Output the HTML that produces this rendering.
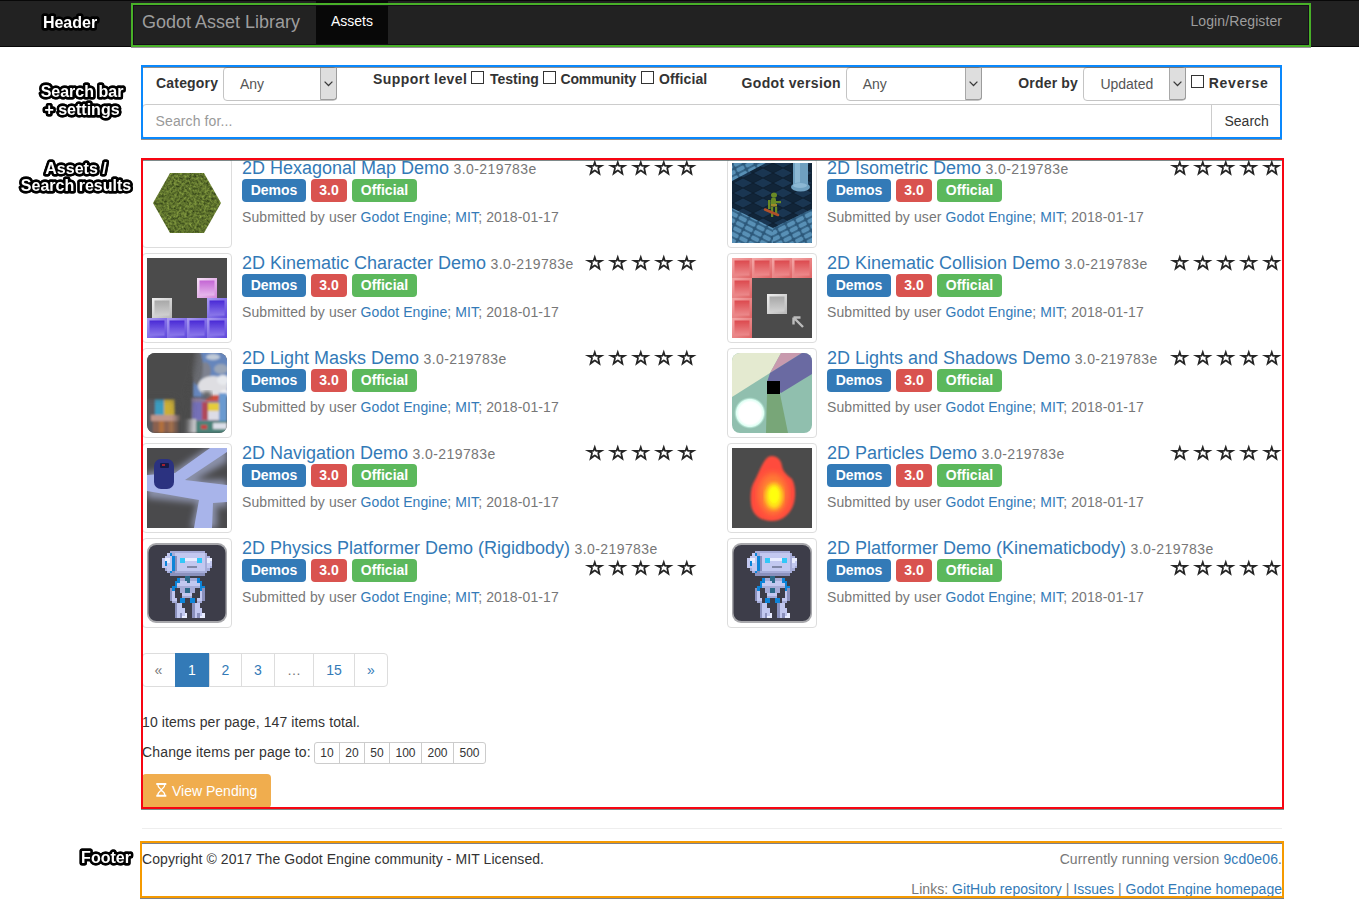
<!DOCTYPE html>
<html><head><meta charset="utf-8"><title>Godot Asset Library</title>
<style>
html,body{margin:0;padding:0;width:1359px;height:900px;overflow:hidden;background:#fff;font-family:"Liberation Sans", sans-serif;}
.t{position:absolute;white-space:nowrap;}
.a{color:#337ab7;}
.thumb{position:absolute;width:90px;height:90px;box-sizing:border-box;border:1px solid #ddd;border-radius:4px;padding:4px;background:#fff;}
.lbl{position:absolute;height:23px;border-radius:4px;color:#fff;font-weight:bold;font-size:14px;line-height:23px;text-align:center;white-space:nowrap;}
.ann{position:absolute;width:200px;text-align:center;font-size:16px;line-height:16px;font-weight:bold;color:#fff;white-space:nowrap;-webkit-text-stroke:5px #000;paint-order:stroke fill;stroke-linejoin:round;text-shadow:0 0 1px #000;}
</style></head><body>
<svg width="0" height="0" style="position:absolute"><defs><linearGradient id="gpu" x1="0" y1="0" x2="0" y2="1"><stop offset="0" stop-color="#4a2ad6"/><stop offset="1" stop-color="#8a78ea"/></linearGradient><linearGradient id="gpuo" x1="0" y1="0" x2="1" y2="1"><stop offset="0" stop-color="#aa9cf2"/><stop offset="1" stop-color="#6048dc"/></linearGradient><linearGradient id="gpk" x1="0" y1="0" x2="0" y2="1"><stop offset="0" stop-color="#c466d4"/><stop offset="1" stop-color="#e6b8ec"/></linearGradient><linearGradient id="gpko" x1="0" y1="0" x2="1" y2="1"><stop offset="0" stop-color="#f6e2f6"/><stop offset="1" stop-color="#d488dc"/></linearGradient><linearGradient id="ggy" x1="0" y1="0" x2="0" y2="1"><stop offset="0" stop-color="#a8a8a8"/><stop offset="1" stop-color="#d0d0d0"/></linearGradient><linearGradient id="ggyo" x1="0" y1="0" x2="1" y2="1"><stop offset="0" stop-color="#f0f0f0"/><stop offset="1" stop-color="#b8b8b8"/></linearGradient><linearGradient id="grd" x1="0" y1="0" x2="0" y2="1"><stop offset="0" stop-color="#dc4a4e"/><stop offset="1" stop-color="#ec8a8c"/></linearGradient><linearGradient id="grdo" x1="0" y1="0" x2="1" y2="1"><stop offset="0" stop-color="#f4a8a8"/><stop offset="1" stop-color="#e06466"/></linearGradient><filter id="b06"><feGaussianBlur stdDeviation="0.6"/></filter><filter id="b1"><feGaussianBlur stdDeviation="1"/></filter><filter id="b2"><feGaussianBlur stdDeviation="2"/></filter><filter id="b3"><feGaussianBlur stdDeviation="3"/></filter><clipPath id="starclip"><polygon points="9.81,-0.48 11.50,4.93 19.56,5.03 14.15,8.32 15.74,15.84 9.81,11.39 4.19,15.84 6.10,8.32 -0.16,4.93 7.90,4.93"/></clipPath></defs></svg><div style="position:absolute;left:0px;top:0px;width:1359px;height:47px;background:#222;border-top:1px solid #080808;border-bottom:1px solid #080808;box-sizing:border-box"></div>
<div style="position:absolute;left:316px;top:1px;width:72px;height:45px;background:#080808"></div>
<div class="t" style="left:142px;top:12.76px;font-size:18px;line-height:18px;color:#9d9d9d;font-weight:normal;">Godot Asset Library</div>
<div class="t" style="left:331px;top:14.15px;font-size:14px;line-height:14px;color:#fff;font-weight:normal;">Assets</div>
<div class="t" style="right:76.90px;top:14.15px;font-size:14px;line-height:14px;color:#9d9d9d;font-weight:normal;letter-spacing:0.1px;">Login/Register</div>
<div style="position:absolute;left:131px;top:3px;width:1180px;height:44px;border:2px solid #48b028;box-sizing:border-box;box-shadow:inset 0 0 0 1px #160d1a"></div>
<div style="position:absolute;left:131px;top:47px;width:1180px;height:1px;background:rgba(60,40,60,0.5)"></div>
<svg style="position:absolute;left:-30px;top:8.2px;overflow:visible" width="200" height="26"><text x="100" y="20" text-anchor="middle" font-family="Liberation Sans, sans-serif" font-weight="bold" font-size="16" fill="#fff" stroke="#000" stroke-width="5" stroke-linejoin="round" paint-order="stroke" style="filter:drop-shadow(0 0 0.4px #000)">Header</text></svg>
<svg style="position:absolute;left:-18px;top:76.8px;overflow:visible" width="200" height="26"><text x="100" y="20" text-anchor="middle" font-family="Liberation Sans, sans-serif" font-weight="bold" font-size="16" fill="#fff" stroke="#000" stroke-width="5" stroke-linejoin="round" paint-order="stroke" style="filter:drop-shadow(0 0 0.4px #000)">Search bar</text></svg>
<svg style="position:absolute;left:-18px;top:94.6px;overflow:visible" width="200" height="26"><text x="100" y="20" text-anchor="middle" font-family="Liberation Sans, sans-serif" font-weight="bold" font-size="16" fill="#fff" stroke="#000" stroke-width="5" stroke-linejoin="round" paint-order="stroke" style="filter:drop-shadow(0 0 0.4px #000)">+ settings</text></svg>
<svg style="position:absolute;left:-24px;top:154px;overflow:visible" width="200" height="26"><text x="100" y="20" text-anchor="middle" font-family="Liberation Sans, sans-serif" font-weight="bold" font-size="16" fill="#fff" stroke="#000" stroke-width="5" stroke-linejoin="round" paint-order="stroke" style="filter:drop-shadow(0 0 0.4px #000)">Assets /</text></svg>
<svg style="position:absolute;left:-24px;top:171.4px;overflow:visible" width="200" height="26"><text x="100" y="20" text-anchor="middle" font-family="Liberation Sans, sans-serif" font-weight="bold" font-size="16" fill="#fff" stroke="#000" stroke-width="5" stroke-linejoin="round" paint-order="stroke" style="filter:drop-shadow(0 0 0.4px #000)">Search results</text></svg>
<svg style="position:absolute;left:5.5px;top:843.4px;overflow:visible" width="200" height="26"><text x="100" y="20" text-anchor="middle" font-family="Liberation Sans, sans-serif" font-weight="bold" font-size="16" fill="#fff" stroke="#000" stroke-width="5" stroke-linejoin="round" paint-order="stroke" style="filter:drop-shadow(0 0 0.4px #000)">Footer</text></svg>
<div class="t" style="left:156px;top:76.15px;font-size:14px;line-height:14px;color:#333;font-weight:bold;letter-spacing:0.19px;">Category</div>
<div style="position:absolute;left:223px;top:67px;width:114px;height:34px;box-sizing:border-box;border:1px solid #c4c4c4;border-radius:4px;background:#fff"></div><div style="position:absolute;left:320px;top:68px;width:17px;height:32px;box-sizing:border-box;background:#dedede;border-left:1px solid #a8a8a8;border-right:1px solid #9c9c9c;border-bottom:1px solid #9c9c9c;border-radius:0 0 3px 0"></div><svg style="position:absolute;left:323.5px;top:80.5px" width="9" height="6" viewBox="0 0 9 6"><path d="M0.6,0.6 L4.5,4.5 L8.4,0.6" stroke="#3a3a3a" stroke-width="1.25" fill="none"/></svg>
<div class="t" style="left:240px;top:76.85px;font-size:14px;line-height:14px;color:#555;font-weight:normal;">Any</div>
<div class="t" style="left:373px;top:71.65px;font-size:14px;line-height:14px;color:#333;font-weight:bold;letter-spacing:0.44px;">Support level</div>
<div style="position:absolute;left:471px;top:71px;width:13px;height:13px;border:1px solid #333;box-sizing:border-box;background:#fff"></div>
<div class="t" style="left:490px;top:71.65px;font-size:14px;line-height:14px;color:#333;font-weight:bold;">Testing</div>
<div style="position:absolute;left:543px;top:71px;width:13px;height:13px;border:1px solid #333;box-sizing:border-box;background:#fff"></div>
<div class="t" style="left:560.5px;top:71.65px;font-size:14px;line-height:14px;color:#333;font-weight:bold;letter-spacing:-0.16px;">Community</div>
<div style="position:absolute;left:641px;top:71px;width:13px;height:13px;border:1px solid #333;box-sizing:border-box;background:#fff"></div>
<div class="t" style="left:659px;top:71.65px;font-size:14px;line-height:14px;color:#333;font-weight:bold;letter-spacing:0.1px;">Official</div>
<div class="t" style="left:741.5px;top:76.15px;font-size:14px;line-height:14px;color:#333;font-weight:bold;letter-spacing:0.35px;">Godot version</div>
<div style="position:absolute;left:846px;top:67px;width:136px;height:34px;box-sizing:border-box;border:1px solid #c4c4c4;border-radius:4px;background:#fff"></div><div style="position:absolute;left:965px;top:68px;width:17px;height:32px;box-sizing:border-box;background:#dedede;border-left:1px solid #a8a8a8;border-right:1px solid #9c9c9c;border-bottom:1px solid #9c9c9c;border-radius:0 0 3px 0"></div><svg style="position:absolute;left:968.5px;top:80.5px" width="9" height="6" viewBox="0 0 9 6"><path d="M0.6,0.6 L4.5,4.5 L8.4,0.6" stroke="#3a3a3a" stroke-width="1.25" fill="none"/></svg>
<div class="t" style="left:862.7px;top:76.85px;font-size:14px;line-height:14px;color:#555;font-weight:normal;">Any</div>
<div class="t" style="left:1018.3px;top:76.15px;font-size:14px;line-height:14px;color:#333;font-weight:bold;letter-spacing:0.17px;">Order by</div>
<div style="position:absolute;left:1083px;top:67px;width:103px;height:34px;box-sizing:border-box;border:1px solid #c4c4c4;border-radius:4px;background:#fff"></div><div style="position:absolute;left:1169px;top:68px;width:17px;height:32px;box-sizing:border-box;background:#dedede;border-left:1px solid #a8a8a8;border-right:1px solid #9c9c9c;border-bottom:1px solid #9c9c9c;border-radius:0 0 3px 0"></div><svg style="position:absolute;left:1172.5px;top:80.5px" width="9" height="6" viewBox="0 0 9 6"><path d="M0.6,0.6 L4.5,4.5 L8.4,0.6" stroke="#3a3a3a" stroke-width="1.25" fill="none"/></svg>
<div class="t" style="left:1100.4px;top:76.85px;font-size:14px;line-height:14px;color:#555;font-weight:normal;">Updated</div>
<div style="position:absolute;left:1191px;top:75px;width:13px;height:13px;border:1px solid #333;box-sizing:border-box;background:#fff"></div>
<div class="t" style="left:1208.7px;top:76.15px;font-size:14px;line-height:14px;color:#333;font-weight:bold;letter-spacing:0.77px;">Reverse</div>
<div style="position:absolute;left:142px;top:104px;width:1140px;height:35px;border:1px solid #ccc;border-radius:4px;box-sizing:border-box"></div>
<div style="position:absolute;left:1211px;top:104px;width:1px;height:35px;background:#ccc"></div>
<div class="t" style="left:155.6px;top:114.15px;font-size:14px;line-height:14px;color:#999;font-weight:normal;letter-spacing:0.1px;">Search for...</div>
<div class="t" style="left:1224.5px;top:114.15px;font-size:14px;line-height:14px;color:#333;font-weight:normal;">Search</div>
<div style="position:absolute;left:141px;top:65px;width:1141px;height:74px;border:2px solid #0a88fc;box-sizing:border-box"></div>
<div style="position:absolute;left:143px;top:67px;width:1137px;height:1px;background:rgba(60,50,40,0.55)"></div>
<div style="position:absolute;left:141px;top:139px;width:1141px;height:1px;background:rgba(60,50,40,0.55)"></div>
<div class="thumb" style="left:142px;top:158px"><svg width="80" height="80" viewBox="0 0 80 80" style="display:block"><defs><filter id="tx" x="0" y="0" width="100%" height="100%" color-interpolation-filters="sRGB"><feTurbulence type="fractalNoise" baseFrequency="0.4" numOctaves="3" seed="7" result="n"/><feColorMatrix in="n" values="0.5 0 0 0 0.12  0.55 0 0 0 0.175  0.25 0 0 0 0.05  0 0 0 0 1" result="m"/><feComposite in="m" in2="SourceGraphic" operator="in"/></filter></defs><polygon points="23,10 57,10 74,40 57,70 23,70 6,40" fill="#5e7c28" filter="url(#tx)"/></svg></div>
<div class="t" style="left:242px;top:158.76px;font-size:18px;line-height:18px;color:#337ab7;white-space:nowrap">2D Hexagonal Map Demo <span style="font-size:14px;color:#777;letter-spacing:0.4px;margin-left:-0.5px">3.0-219783e</span></div>
<div style="position:absolute;left:585.4px;top:160.2px;width:19px;height:16px"><svg width="19" height="16" viewBox="0 0 19 16" style="position:absolute;left:0;top:0;overflow:visible"><polygon points="9.81,-0.48 11.50,4.93 19.56,5.03 14.15,8.32 15.74,15.84 9.81,11.39 4.19,15.84 6.10,8.32 -0.16,4.93 7.90,4.93" fill="#fff" stroke="#262626" stroke-width="3.5" stroke-linejoin="round" clip-path="url(#starclip)"/></svg></div><div style="position:absolute;left:608.4px;top:160.2px;width:19px;height:16px"><svg width="19" height="16" viewBox="0 0 19 16" style="position:absolute;left:0;top:0;overflow:visible"><polygon points="9.81,-0.48 11.50,4.93 19.56,5.03 14.15,8.32 15.74,15.84 9.81,11.39 4.19,15.84 6.10,8.32 -0.16,4.93 7.90,4.93" fill="#fff" stroke="#262626" stroke-width="3.5" stroke-linejoin="round" clip-path="url(#starclip)"/></svg></div><div style="position:absolute;left:631.4px;top:160.2px;width:19px;height:16px"><svg width="19" height="16" viewBox="0 0 19 16" style="position:absolute;left:0;top:0;overflow:visible"><polygon points="9.81,-0.48 11.50,4.93 19.56,5.03 14.15,8.32 15.74,15.84 9.81,11.39 4.19,15.84 6.10,8.32 -0.16,4.93 7.90,4.93" fill="#fff" stroke="#262626" stroke-width="3.5" stroke-linejoin="round" clip-path="url(#starclip)"/></svg></div><div style="position:absolute;left:654.4px;top:160.2px;width:19px;height:16px"><svg width="19" height="16" viewBox="0 0 19 16" style="position:absolute;left:0;top:0;overflow:visible"><polygon points="9.81,-0.48 11.50,4.93 19.56,5.03 14.15,8.32 15.74,15.84 9.81,11.39 4.19,15.84 6.10,8.32 -0.16,4.93 7.90,4.93" fill="#fff" stroke="#262626" stroke-width="3.5" stroke-linejoin="round" clip-path="url(#starclip)"/></svg></div><div style="position:absolute;left:677.4px;top:160.2px;width:19px;height:16px"><svg width="19" height="16" viewBox="0 0 19 16" style="position:absolute;left:0;top:0;overflow:visible"><polygon points="9.81,-0.48 11.50,4.93 19.56,5.03 14.15,8.32 15.74,15.84 9.81,11.39 4.19,15.84 6.10,8.32 -0.16,4.93 7.90,4.93" fill="#fff" stroke="#262626" stroke-width="3.5" stroke-linejoin="round" clip-path="url(#starclip)"/></svg></div>
<div class="lbl" style="left:242px;top:179px;width:64px;background:#337ab7">Demos</div><div class="lbl" style="left:311px;top:179px;width:36px;background:#d9534f">3.0</div><div class="lbl" style="left:352px;top:179px;width:65px;background:#5cb85c">Official</div>
<div class="t" style="left:242px;top:210.15px;font-size:14px;line-height:14px;color:#777;white-space:nowrap;letter-spacing:0.1px">Submitted by user <span class="a">Godot Engine</span>; <span class="a">MIT</span>; 2018-01-17</div>
<div class="thumb" style="left:727px;top:158px"><svg width="80" height="80" viewBox="0 0 80 80" style="display:block"><defs><pattern id="cob" width="10" height="6" patternUnits="userSpaceOnUse" patternTransform="rotate(-27)"><rect width="10" height="6" fill="#2c587a"/><rect x="0.7" y="0.7" width="8.6" height="4.6" rx="2" fill="#5890b6"/></pattern><pattern id="cob2" width="10" height="6" patternUnits="userSpaceOnUse" patternTransform="rotate(27)"><rect width="10" height="6" fill="#2c587a"/><rect x="0.7" y="0.7" width="8.6" height="4.6" rx="2" fill="#5890b6"/></pattern><pattern id="flr" width="20" height="10" patternUnits="userSpaceOnUse" patternTransform="translate(1,5)"><rect width="20" height="10" fill="#112539"/><polygon points="10,0 20,5 10,10 0,5" fill="#1a3652"/><path d="M10,0 L20,5 L10,10 L0,5 Z" fill="none" stroke="#0b1826" stroke-width="0.7"/></pattern></defs><rect width="80" height="80" fill="url(#flr)"/><polygon points="0,45 41,65 41,80 0,80" fill="url(#cob2)"/><polygon points="41,65 80,46 80,80 41,80" fill="url(#cob)"/><polygon points="0,0 34,0 0,18" fill="url(#cob)"/><rect x="61" y="0" width="15" height="23" fill="#6fa0c0"/><rect x="63" y="0" width="5" height="22" fill="#8cb8d4"/><ellipse cx="68.5" cy="24" rx="9.5" ry="4.5" fill="#6fa0c0"/><ellipse cx="68" cy="22.5" rx="7" ry="2.5" fill="#8cb8d4"/><g fill="#6a8a26"><ellipse cx="42" cy="32" rx="3" ry="2.6"/><rect x="39" y="34.5" width="5" height="9" rx="2"/><rect x="36" y="37" width="2.5" height="9"/><rect x="43" y="38" width="6" height="2.2"/><rect x="39" y="44" width="2.2" height="10"/><rect x="43" y="44" width="2.2" height="8"/></g><rect x="39" y="41" width="6" height="2.5" fill="#a08a2a"/><path d="M33,46.5 L46,52" stroke="#b0502a" stroke-width="2.6" stroke-linecap="round"/></svg></div>
<div class="t" style="left:827px;top:158.76px;font-size:18px;line-height:18px;color:#337ab7;white-space:nowrap">2D Isometric Demo <span style="font-size:14px;color:#777;letter-spacing:0.4px;margin-left:-0.5px">3.0-219783e</span></div>
<div style="position:absolute;left:1170.4px;top:160.2px;width:19px;height:16px"><svg width="19" height="16" viewBox="0 0 19 16" style="position:absolute;left:0;top:0;overflow:visible"><polygon points="9.81,-0.48 11.50,4.93 19.56,5.03 14.15,8.32 15.74,15.84 9.81,11.39 4.19,15.84 6.10,8.32 -0.16,4.93 7.90,4.93" fill="#fff" stroke="#262626" stroke-width="3.5" stroke-linejoin="round" clip-path="url(#starclip)"/></svg></div><div style="position:absolute;left:1193.4px;top:160.2px;width:19px;height:16px"><svg width="19" height="16" viewBox="0 0 19 16" style="position:absolute;left:0;top:0;overflow:visible"><polygon points="9.81,-0.48 11.50,4.93 19.56,5.03 14.15,8.32 15.74,15.84 9.81,11.39 4.19,15.84 6.10,8.32 -0.16,4.93 7.90,4.93" fill="#fff" stroke="#262626" stroke-width="3.5" stroke-linejoin="round" clip-path="url(#starclip)"/></svg></div><div style="position:absolute;left:1216.4px;top:160.2px;width:19px;height:16px"><svg width="19" height="16" viewBox="0 0 19 16" style="position:absolute;left:0;top:0;overflow:visible"><polygon points="9.81,-0.48 11.50,4.93 19.56,5.03 14.15,8.32 15.74,15.84 9.81,11.39 4.19,15.84 6.10,8.32 -0.16,4.93 7.90,4.93" fill="#fff" stroke="#262626" stroke-width="3.5" stroke-linejoin="round" clip-path="url(#starclip)"/></svg></div><div style="position:absolute;left:1239.4px;top:160.2px;width:19px;height:16px"><svg width="19" height="16" viewBox="0 0 19 16" style="position:absolute;left:0;top:0;overflow:visible"><polygon points="9.81,-0.48 11.50,4.93 19.56,5.03 14.15,8.32 15.74,15.84 9.81,11.39 4.19,15.84 6.10,8.32 -0.16,4.93 7.90,4.93" fill="#fff" stroke="#262626" stroke-width="3.5" stroke-linejoin="round" clip-path="url(#starclip)"/></svg></div><div style="position:absolute;left:1262.4px;top:160.2px;width:19px;height:16px"><svg width="19" height="16" viewBox="0 0 19 16" style="position:absolute;left:0;top:0;overflow:visible"><polygon points="9.81,-0.48 11.50,4.93 19.56,5.03 14.15,8.32 15.74,15.84 9.81,11.39 4.19,15.84 6.10,8.32 -0.16,4.93 7.90,4.93" fill="#fff" stroke="#262626" stroke-width="3.5" stroke-linejoin="round" clip-path="url(#starclip)"/></svg></div>
<div class="lbl" style="left:827px;top:179px;width:64px;background:#337ab7">Demos</div><div class="lbl" style="left:896px;top:179px;width:36px;background:#d9534f">3.0</div><div class="lbl" style="left:937px;top:179px;width:65px;background:#5cb85c">Official</div>
<div class="t" style="left:827px;top:210.15px;font-size:14px;line-height:14px;color:#777;white-space:nowrap;letter-spacing:0.1px">Submitted by user <span class="a">Godot Engine</span>; <span class="a">MIT</span>; 2018-01-17</div>
<div class="thumb" style="left:142px;top:253px"><svg width="80" height="80" viewBox="0 0 80 80" style="display:block"><rect width="80" height="80" fill="#4b4b4b"/><rect x="0" y="60" width="20" height="20" fill="url(#gpuo)"/><rect x="2.5" y="62.5" width="15" height="15" fill="url(#gpu)" filter="url(#b06)"/><rect x="20" y="60" width="20" height="20" fill="url(#gpuo)"/><rect x="22.5" y="62.5" width="15" height="15" fill="url(#gpu)" filter="url(#b06)"/><rect x="40" y="60" width="20" height="20" fill="url(#gpuo)"/><rect x="42.5" y="62.5" width="15" height="15" fill="url(#gpu)" filter="url(#b06)"/><rect x="60" y="60" width="20" height="20" fill="url(#gpuo)"/><rect x="62.5" y="62.5" width="15" height="15" fill="url(#gpu)" filter="url(#b06)"/><rect x="60" y="40" width="20" height="20" fill="url(#gpuo)"/><rect x="62.5" y="42.5" width="15" height="15" fill="url(#gpu)" filter="url(#b06)"/><rect x="50" y="20" width="20" height="20" fill="url(#gpko)"/><rect x="52.5" y="22.5" width="15" height="15" fill="url(#gpk)" filter="url(#b06)"/><rect x="5" y="40" width="20" height="20" fill="url(#ggyo)"/><rect x="7.5" y="42.5" width="15" height="15" fill="url(#ggy)" filter="url(#b06)"/></svg></div>
<div class="t" style="left:242px;top:253.76px;font-size:18px;line-height:18px;color:#337ab7;white-space:nowrap">2D Kinematic Character Demo <span style="font-size:14px;color:#777;letter-spacing:0.4px;margin-left:-0.5px">3.0-219783e</span></div>
<div style="position:absolute;left:585.4px;top:255.2px;width:19px;height:16px"><svg width="19" height="16" viewBox="0 0 19 16" style="position:absolute;left:0;top:0;overflow:visible"><polygon points="9.81,-0.48 11.50,4.93 19.56,5.03 14.15,8.32 15.74,15.84 9.81,11.39 4.19,15.84 6.10,8.32 -0.16,4.93 7.90,4.93" fill="#fff" stroke="#262626" stroke-width="3.5" stroke-linejoin="round" clip-path="url(#starclip)"/></svg></div><div style="position:absolute;left:608.4px;top:255.2px;width:19px;height:16px"><svg width="19" height="16" viewBox="0 0 19 16" style="position:absolute;left:0;top:0;overflow:visible"><polygon points="9.81,-0.48 11.50,4.93 19.56,5.03 14.15,8.32 15.74,15.84 9.81,11.39 4.19,15.84 6.10,8.32 -0.16,4.93 7.90,4.93" fill="#fff" stroke="#262626" stroke-width="3.5" stroke-linejoin="round" clip-path="url(#starclip)"/></svg></div><div style="position:absolute;left:631.4px;top:255.2px;width:19px;height:16px"><svg width="19" height="16" viewBox="0 0 19 16" style="position:absolute;left:0;top:0;overflow:visible"><polygon points="9.81,-0.48 11.50,4.93 19.56,5.03 14.15,8.32 15.74,15.84 9.81,11.39 4.19,15.84 6.10,8.32 -0.16,4.93 7.90,4.93" fill="#fff" stroke="#262626" stroke-width="3.5" stroke-linejoin="round" clip-path="url(#starclip)"/></svg></div><div style="position:absolute;left:654.4px;top:255.2px;width:19px;height:16px"><svg width="19" height="16" viewBox="0 0 19 16" style="position:absolute;left:0;top:0;overflow:visible"><polygon points="9.81,-0.48 11.50,4.93 19.56,5.03 14.15,8.32 15.74,15.84 9.81,11.39 4.19,15.84 6.10,8.32 -0.16,4.93 7.90,4.93" fill="#fff" stroke="#262626" stroke-width="3.5" stroke-linejoin="round" clip-path="url(#starclip)"/></svg></div><div style="position:absolute;left:677.4px;top:255.2px;width:19px;height:16px"><svg width="19" height="16" viewBox="0 0 19 16" style="position:absolute;left:0;top:0;overflow:visible"><polygon points="9.81,-0.48 11.50,4.93 19.56,5.03 14.15,8.32 15.74,15.84 9.81,11.39 4.19,15.84 6.10,8.32 -0.16,4.93 7.90,4.93" fill="#fff" stroke="#262626" stroke-width="3.5" stroke-linejoin="round" clip-path="url(#starclip)"/></svg></div>
<div class="lbl" style="left:242px;top:274px;width:64px;background:#337ab7">Demos</div><div class="lbl" style="left:311px;top:274px;width:36px;background:#d9534f">3.0</div><div class="lbl" style="left:352px;top:274px;width:65px;background:#5cb85c">Official</div>
<div class="t" style="left:242px;top:305.15px;font-size:14px;line-height:14px;color:#777;white-space:nowrap;letter-spacing:0.1px">Submitted by user <span class="a">Godot Engine</span>; <span class="a">MIT</span>; 2018-01-17</div>
<div class="thumb" style="left:727px;top:253px"><svg width="80" height="80" viewBox="0 0 80 80" style="display:block"><rect width="80" height="80" fill="#4b4b4b"/><rect x="0" y="0" width="20" height="20" fill="url(#grdo)"/><rect x="2.5" y="2.5" width="15" height="15" fill="url(#grd)" filter="url(#b06)"/><rect x="20" y="0" width="20" height="20" fill="url(#grdo)"/><rect x="22.5" y="2.5" width="15" height="15" fill="url(#grd)" filter="url(#b06)"/><rect x="40" y="0" width="20" height="20" fill="url(#grdo)"/><rect x="42.5" y="2.5" width="15" height="15" fill="url(#grd)" filter="url(#b06)"/><rect x="60" y="0" width="20" height="20" fill="url(#grdo)"/><rect x="62.5" y="2.5" width="15" height="15" fill="url(#grd)" filter="url(#b06)"/><rect x="0" y="20" width="20" height="20" fill="url(#grdo)"/><rect x="2.5" y="22.5" width="15" height="15" fill="url(#grd)" filter="url(#b06)"/><rect x="0" y="40" width="20" height="20" fill="url(#grdo)"/><rect x="2.5" y="42.5" width="15" height="15" fill="url(#grd)" filter="url(#b06)"/><rect x="0" y="60" width="20" height="20" fill="url(#grdo)"/><rect x="2.5" y="62.5" width="15" height="15" fill="url(#grd)" filter="url(#b06)"/><rect x="35" y="36" width="20" height="20" fill="url(#ggyo)"/><rect x="37.5" y="38.5" width="15" height="15" fill="url(#ggy)" filter="url(#b06)"/><path d="M61.5,59.5 L61.5,66.5 M61.5,59.5 L68.5,59.5 M61.5,59.5 L71,69" stroke="#bcbcbc" stroke-width="2.4" fill="none"/></svg></div>
<div class="t" style="left:827px;top:253.76px;font-size:18px;line-height:18px;color:#337ab7;white-space:nowrap">2D Kinematic Collision Demo <span style="font-size:14px;color:#777;letter-spacing:0.4px;margin-left:-0.5px">3.0-219783e</span></div>
<div style="position:absolute;left:1170.4px;top:255.2px;width:19px;height:16px"><svg width="19" height="16" viewBox="0 0 19 16" style="position:absolute;left:0;top:0;overflow:visible"><polygon points="9.81,-0.48 11.50,4.93 19.56,5.03 14.15,8.32 15.74,15.84 9.81,11.39 4.19,15.84 6.10,8.32 -0.16,4.93 7.90,4.93" fill="#fff" stroke="#262626" stroke-width="3.5" stroke-linejoin="round" clip-path="url(#starclip)"/></svg></div><div style="position:absolute;left:1193.4px;top:255.2px;width:19px;height:16px"><svg width="19" height="16" viewBox="0 0 19 16" style="position:absolute;left:0;top:0;overflow:visible"><polygon points="9.81,-0.48 11.50,4.93 19.56,5.03 14.15,8.32 15.74,15.84 9.81,11.39 4.19,15.84 6.10,8.32 -0.16,4.93 7.90,4.93" fill="#fff" stroke="#262626" stroke-width="3.5" stroke-linejoin="round" clip-path="url(#starclip)"/></svg></div><div style="position:absolute;left:1216.4px;top:255.2px;width:19px;height:16px"><svg width="19" height="16" viewBox="0 0 19 16" style="position:absolute;left:0;top:0;overflow:visible"><polygon points="9.81,-0.48 11.50,4.93 19.56,5.03 14.15,8.32 15.74,15.84 9.81,11.39 4.19,15.84 6.10,8.32 -0.16,4.93 7.90,4.93" fill="#fff" stroke="#262626" stroke-width="3.5" stroke-linejoin="round" clip-path="url(#starclip)"/></svg></div><div style="position:absolute;left:1239.4px;top:255.2px;width:19px;height:16px"><svg width="19" height="16" viewBox="0 0 19 16" style="position:absolute;left:0;top:0;overflow:visible"><polygon points="9.81,-0.48 11.50,4.93 19.56,5.03 14.15,8.32 15.74,15.84 9.81,11.39 4.19,15.84 6.10,8.32 -0.16,4.93 7.90,4.93" fill="#fff" stroke="#262626" stroke-width="3.5" stroke-linejoin="round" clip-path="url(#starclip)"/></svg></div><div style="position:absolute;left:1262.4px;top:255.2px;width:19px;height:16px"><svg width="19" height="16" viewBox="0 0 19 16" style="position:absolute;left:0;top:0;overflow:visible"><polygon points="9.81,-0.48 11.50,4.93 19.56,5.03 14.15,8.32 15.74,15.84 9.81,11.39 4.19,15.84 6.10,8.32 -0.16,4.93 7.90,4.93" fill="#fff" stroke="#262626" stroke-width="3.5" stroke-linejoin="round" clip-path="url(#starclip)"/></svg></div>
<div class="lbl" style="left:827px;top:274px;width:64px;background:#337ab7">Demos</div><div class="lbl" style="left:896px;top:274px;width:36px;background:#d9534f">3.0</div><div class="lbl" style="left:937px;top:274px;width:65px;background:#5cb85c">Official</div>
<div class="t" style="left:827px;top:305.15px;font-size:14px;line-height:14px;color:#777;white-space:nowrap;letter-spacing:0.1px">Submitted by user <span class="a">Godot Engine</span>; <span class="a">MIT</span>; 2018-01-17</div>
<div class="thumb" style="left:142px;top:348px"><svg width="80" height="80" viewBox="0 0 80 80" style="display:block"><defs><clipPath id="mc"><rect width="80" height="80" rx="8"/></clipPath></defs><g clip-path="url(#mc)"><rect width="80" height="80" fill="#4b4b4b"/><g filter="url(#b1)"><rect x="46" y="-2" width="36" height="46" fill="#6686bc"/><ellipse cx="66" cy="4" rx="7" ry="3" fill="#c0cad8"/><ellipse cx="74" cy="16" rx="7" ry="5" fill="#9aa6b8"/><ellipse cx="58" cy="18" rx="6" ry="9" fill="#7e8290"/><ellipse cx="50" cy="14" rx="6" ry="18" fill="#6a6c72"/><ellipse cx="66" cy="33" rx="15" ry="10" fill="#dedee2"/><ellipse cx="76" cy="27" rx="6" ry="5" fill="#e8eaee"/><ellipse cx="78" cy="40" rx="5" ry="3" fill="#f2f2f4"/><rect x="44" y="45" width="36" height="24" fill="#8a7a9a"/><rect x="45" y="49" width="10" height="18" fill="#7470b8"/><rect x="55" y="49" width="6" height="18" fill="#b04a5a"/><rect x="61" y="50" width="11" height="8" fill="#e6cc3a"/><rect x="61" y="58" width="11" height="9" fill="#dcdce6"/><rect x="72" y="40" width="8" height="29" fill="#6a9ad0"/><polygon points="58,48 62,42 72,42 71,48" fill="#d0503c"/><rect x="44" y="68" width="36" height="12" fill="#4a8278"/><rect x="66" y="70" width="14" height="6" fill="#dcdfe8"/><rect x="54" y="72" width="6" height="4" fill="#c84040"/><rect x="36" y="66" width="13" height="14" fill="#c8c8cc"/><rect x="0" y="46" width="8" height="34" fill="#5a5a5e"/><rect x="8" y="46" width="9" height="17" fill="#3a9cc0"/><rect x="17" y="46" width="11" height="17" fill="#ccae36"/><rect x="4" y="62" width="30" height="6" fill="#c0968a"/><rect x="6" y="68" width="26" height="12" fill="#8a6050"/><rect x="12" y="68" width="5" height="12" fill="#b0703e"/><rect x="22" y="68" width="5" height="12" fill="#a0704e"/></g><path d="M-5,-5 L50,-5 L48,10 L46,22 L43,32 L40,40 L44,46 L43,60 L42,85 L30,85 L30,60 L28,45 L-5,45 Z" fill="#4b4b4b" filter="url(#b3)"/><ellipse cx="60" cy="42" rx="5" ry="4" fill="#606060" filter="url(#b2)"/></g></svg></div>
<div class="t" style="left:242px;top:348.76px;font-size:18px;line-height:18px;color:#337ab7;white-space:nowrap">2D Light Masks Demo <span style="font-size:14px;color:#777;letter-spacing:0.4px;margin-left:-0.5px">3.0-219783e</span></div>
<div style="position:absolute;left:585.4px;top:350.2px;width:19px;height:16px"><svg width="19" height="16" viewBox="0 0 19 16" style="position:absolute;left:0;top:0;overflow:visible"><polygon points="9.81,-0.48 11.50,4.93 19.56,5.03 14.15,8.32 15.74,15.84 9.81,11.39 4.19,15.84 6.10,8.32 -0.16,4.93 7.90,4.93" fill="#fff" stroke="#262626" stroke-width="3.5" stroke-linejoin="round" clip-path="url(#starclip)"/></svg></div><div style="position:absolute;left:608.4px;top:350.2px;width:19px;height:16px"><svg width="19" height="16" viewBox="0 0 19 16" style="position:absolute;left:0;top:0;overflow:visible"><polygon points="9.81,-0.48 11.50,4.93 19.56,5.03 14.15,8.32 15.74,15.84 9.81,11.39 4.19,15.84 6.10,8.32 -0.16,4.93 7.90,4.93" fill="#fff" stroke="#262626" stroke-width="3.5" stroke-linejoin="round" clip-path="url(#starclip)"/></svg></div><div style="position:absolute;left:631.4px;top:350.2px;width:19px;height:16px"><svg width="19" height="16" viewBox="0 0 19 16" style="position:absolute;left:0;top:0;overflow:visible"><polygon points="9.81,-0.48 11.50,4.93 19.56,5.03 14.15,8.32 15.74,15.84 9.81,11.39 4.19,15.84 6.10,8.32 -0.16,4.93 7.90,4.93" fill="#fff" stroke="#262626" stroke-width="3.5" stroke-linejoin="round" clip-path="url(#starclip)"/></svg></div><div style="position:absolute;left:654.4px;top:350.2px;width:19px;height:16px"><svg width="19" height="16" viewBox="0 0 19 16" style="position:absolute;left:0;top:0;overflow:visible"><polygon points="9.81,-0.48 11.50,4.93 19.56,5.03 14.15,8.32 15.74,15.84 9.81,11.39 4.19,15.84 6.10,8.32 -0.16,4.93 7.90,4.93" fill="#fff" stroke="#262626" stroke-width="3.5" stroke-linejoin="round" clip-path="url(#starclip)"/></svg></div><div style="position:absolute;left:677.4px;top:350.2px;width:19px;height:16px"><svg width="19" height="16" viewBox="0 0 19 16" style="position:absolute;left:0;top:0;overflow:visible"><polygon points="9.81,-0.48 11.50,4.93 19.56,5.03 14.15,8.32 15.74,15.84 9.81,11.39 4.19,15.84 6.10,8.32 -0.16,4.93 7.90,4.93" fill="#fff" stroke="#262626" stroke-width="3.5" stroke-linejoin="round" clip-path="url(#starclip)"/></svg></div>
<div class="lbl" style="left:242px;top:369px;width:64px;background:#337ab7">Demos</div><div class="lbl" style="left:311px;top:369px;width:36px;background:#d9534f">3.0</div><div class="lbl" style="left:352px;top:369px;width:65px;background:#5cb85c">Official</div>
<div class="t" style="left:242px;top:400.15px;font-size:14px;line-height:14px;color:#777;white-space:nowrap;letter-spacing:0.1px">Submitted by user <span class="a">Godot Engine</span>; <span class="a">MIT</span>; 2018-01-17</div>
<div class="thumb" style="left:727px;top:348px"><svg width="80" height="80" viewBox="0 0 80 80" style="display:block"><defs><clipPath id="rc"><rect width="80" height="80" rx="8"/></clipPath><radialGradient id="wg"><stop offset="0.68" stop-color="#fff"/><stop offset="0.85" stop-color="#e0fff4"/><stop offset="1" stop-color="#a8e0cc" stop-opacity="0"/></radialGradient></defs><g clip-path="url(#rc)"><rect width="80" height="80" fill="#90bfae"/><polygon points="0,0 49,0 38,20 0,44" fill="#e4ead0"/><polygon points="49,0 70,0 38,20" fill="#c89aae"/><polygon points="38,20 70,0 80,0 80,21 49,40 35,29" fill="#6a6aa2"/><polygon points="35,41 48,41 56,80 34,80" fill="#78a678"/><rect x="35" y="28" width="13" height="13" fill="#000"/><circle cx="18" cy="60" r="16" fill="url(#wg)"/></g></svg></div>
<div class="t" style="left:827px;top:348.76px;font-size:18px;line-height:18px;color:#337ab7;white-space:nowrap">2D Lights and Shadows Demo <span style="font-size:14px;color:#777;letter-spacing:0.4px;margin-left:-0.5px">3.0-219783e</span></div>
<div style="position:absolute;left:1170.4px;top:350.2px;width:19px;height:16px"><svg width="19" height="16" viewBox="0 0 19 16" style="position:absolute;left:0;top:0;overflow:visible"><polygon points="9.81,-0.48 11.50,4.93 19.56,5.03 14.15,8.32 15.74,15.84 9.81,11.39 4.19,15.84 6.10,8.32 -0.16,4.93 7.90,4.93" fill="#fff" stroke="#262626" stroke-width="3.5" stroke-linejoin="round" clip-path="url(#starclip)"/></svg></div><div style="position:absolute;left:1193.4px;top:350.2px;width:19px;height:16px"><svg width="19" height="16" viewBox="0 0 19 16" style="position:absolute;left:0;top:0;overflow:visible"><polygon points="9.81,-0.48 11.50,4.93 19.56,5.03 14.15,8.32 15.74,15.84 9.81,11.39 4.19,15.84 6.10,8.32 -0.16,4.93 7.90,4.93" fill="#fff" stroke="#262626" stroke-width="3.5" stroke-linejoin="round" clip-path="url(#starclip)"/></svg></div><div style="position:absolute;left:1216.4px;top:350.2px;width:19px;height:16px"><svg width="19" height="16" viewBox="0 0 19 16" style="position:absolute;left:0;top:0;overflow:visible"><polygon points="9.81,-0.48 11.50,4.93 19.56,5.03 14.15,8.32 15.74,15.84 9.81,11.39 4.19,15.84 6.10,8.32 -0.16,4.93 7.90,4.93" fill="#fff" stroke="#262626" stroke-width="3.5" stroke-linejoin="round" clip-path="url(#starclip)"/></svg></div><div style="position:absolute;left:1239.4px;top:350.2px;width:19px;height:16px"><svg width="19" height="16" viewBox="0 0 19 16" style="position:absolute;left:0;top:0;overflow:visible"><polygon points="9.81,-0.48 11.50,4.93 19.56,5.03 14.15,8.32 15.74,15.84 9.81,11.39 4.19,15.84 6.10,8.32 -0.16,4.93 7.90,4.93" fill="#fff" stroke="#262626" stroke-width="3.5" stroke-linejoin="round" clip-path="url(#starclip)"/></svg></div><div style="position:absolute;left:1262.4px;top:350.2px;width:19px;height:16px"><svg width="19" height="16" viewBox="0 0 19 16" style="position:absolute;left:0;top:0;overflow:visible"><polygon points="9.81,-0.48 11.50,4.93 19.56,5.03 14.15,8.32 15.74,15.84 9.81,11.39 4.19,15.84 6.10,8.32 -0.16,4.93 7.90,4.93" fill="#fff" stroke="#262626" stroke-width="3.5" stroke-linejoin="round" clip-path="url(#starclip)"/></svg></div>
<div class="lbl" style="left:827px;top:369px;width:64px;background:#337ab7">Demos</div><div class="lbl" style="left:896px;top:369px;width:36px;background:#d9534f">3.0</div><div class="lbl" style="left:937px;top:369px;width:65px;background:#5cb85c">Official</div>
<div class="t" style="left:827px;top:400.15px;font-size:14px;line-height:14px;color:#777;white-space:nowrap;letter-spacing:0.1px">Submitted by user <span class="a">Godot Engine</span>; <span class="a">MIT</span>; 2018-01-17</div>
<div class="thumb" style="left:142px;top:443px"><svg width="80" height="80" viewBox="0 0 80 80" style="display:block"><rect width="80" height="80" fill="#4a4a4c"/><polygon points="0,24 28,22 60,0 80,0 80,14 48,32 80,32 80,60 70,58 70,80 44,80 50,55 0,50" fill="#8a90a8" filter="url(#b3)"/><polygon points="0,27 28,25 63,0 80,0 80,4 38,32 80,37 80,54 66,55 65,80 47,80 52,52 0,43" fill="#a8b4ea"/><rect x="7" y="11" width="20" height="30" rx="7" fill="#2b3280"/><rect x="13" y="15" width="9" height="5" rx="1" fill="#161a48"/><rect x="15" y="16" width="3" height="2" fill="#a02030"/></svg></div>
<div class="t" style="left:242px;top:443.76px;font-size:18px;line-height:18px;color:#337ab7;white-space:nowrap">2D Navigation Demo <span style="font-size:14px;color:#777;letter-spacing:0.4px;margin-left:-0.5px">3.0-219783e</span></div>
<div style="position:absolute;left:585.4px;top:445.2px;width:19px;height:16px"><svg width="19" height="16" viewBox="0 0 19 16" style="position:absolute;left:0;top:0;overflow:visible"><polygon points="9.81,-0.48 11.50,4.93 19.56,5.03 14.15,8.32 15.74,15.84 9.81,11.39 4.19,15.84 6.10,8.32 -0.16,4.93 7.90,4.93" fill="#fff" stroke="#262626" stroke-width="3.5" stroke-linejoin="round" clip-path="url(#starclip)"/></svg></div><div style="position:absolute;left:608.4px;top:445.2px;width:19px;height:16px"><svg width="19" height="16" viewBox="0 0 19 16" style="position:absolute;left:0;top:0;overflow:visible"><polygon points="9.81,-0.48 11.50,4.93 19.56,5.03 14.15,8.32 15.74,15.84 9.81,11.39 4.19,15.84 6.10,8.32 -0.16,4.93 7.90,4.93" fill="#fff" stroke="#262626" stroke-width="3.5" stroke-linejoin="round" clip-path="url(#starclip)"/></svg></div><div style="position:absolute;left:631.4px;top:445.2px;width:19px;height:16px"><svg width="19" height="16" viewBox="0 0 19 16" style="position:absolute;left:0;top:0;overflow:visible"><polygon points="9.81,-0.48 11.50,4.93 19.56,5.03 14.15,8.32 15.74,15.84 9.81,11.39 4.19,15.84 6.10,8.32 -0.16,4.93 7.90,4.93" fill="#fff" stroke="#262626" stroke-width="3.5" stroke-linejoin="round" clip-path="url(#starclip)"/></svg></div><div style="position:absolute;left:654.4px;top:445.2px;width:19px;height:16px"><svg width="19" height="16" viewBox="0 0 19 16" style="position:absolute;left:0;top:0;overflow:visible"><polygon points="9.81,-0.48 11.50,4.93 19.56,5.03 14.15,8.32 15.74,15.84 9.81,11.39 4.19,15.84 6.10,8.32 -0.16,4.93 7.90,4.93" fill="#fff" stroke="#262626" stroke-width="3.5" stroke-linejoin="round" clip-path="url(#starclip)"/></svg></div><div style="position:absolute;left:677.4px;top:445.2px;width:19px;height:16px"><svg width="19" height="16" viewBox="0 0 19 16" style="position:absolute;left:0;top:0;overflow:visible"><polygon points="9.81,-0.48 11.50,4.93 19.56,5.03 14.15,8.32 15.74,15.84 9.81,11.39 4.19,15.84 6.10,8.32 -0.16,4.93 7.90,4.93" fill="#fff" stroke="#262626" stroke-width="3.5" stroke-linejoin="round" clip-path="url(#starclip)"/></svg></div>
<div class="lbl" style="left:242px;top:464px;width:64px;background:#337ab7">Demos</div><div class="lbl" style="left:311px;top:464px;width:36px;background:#d9534f">3.0</div><div class="lbl" style="left:352px;top:464px;width:65px;background:#5cb85c">Official</div>
<div class="t" style="left:242px;top:495.15px;font-size:14px;line-height:14px;color:#777;white-space:nowrap;letter-spacing:0.1px">Submitted by user <span class="a">Godot Engine</span>; <span class="a">MIT</span>; 2018-01-17</div>
<div class="thumb" style="left:727px;top:443px"><svg width="80" height="80" viewBox="0 0 80 80" style="display:block"><rect width="80" height="80" fill="#4b4b4b"/><path d="M36,9 C42,6 49,10 50,18 C51,24 55,27 60,31 C64,38 64,50 61,58 C57,68 48,74 38,73 C27,72 20,66 19,56 C18,46 19,38 23,32 C27,25 30,14 36,9 Z" fill="#ff4c3c" filter="url(#b1)"/><ellipse cx="41" cy="46" rx="15" ry="21" fill="#ff7a34" filter="url(#b3)"/><ellipse cx="42" cy="48" rx="9" ry="13" fill="#ffe814" filter="url(#b2)"/><ellipse cx="42" cy="47" rx="5" ry="8" fill="#ffff10" filter="url(#b1)"/></svg></div>
<div class="t" style="left:827px;top:443.76px;font-size:18px;line-height:18px;color:#337ab7;white-space:nowrap">2D Particles Demo <span style="font-size:14px;color:#777;letter-spacing:0.4px;margin-left:-0.5px">3.0-219783e</span></div>
<div style="position:absolute;left:1170.4px;top:445.2px;width:19px;height:16px"><svg width="19" height="16" viewBox="0 0 19 16" style="position:absolute;left:0;top:0;overflow:visible"><polygon points="9.81,-0.48 11.50,4.93 19.56,5.03 14.15,8.32 15.74,15.84 9.81,11.39 4.19,15.84 6.10,8.32 -0.16,4.93 7.90,4.93" fill="#fff" stroke="#262626" stroke-width="3.5" stroke-linejoin="round" clip-path="url(#starclip)"/></svg></div><div style="position:absolute;left:1193.4px;top:445.2px;width:19px;height:16px"><svg width="19" height="16" viewBox="0 0 19 16" style="position:absolute;left:0;top:0;overflow:visible"><polygon points="9.81,-0.48 11.50,4.93 19.56,5.03 14.15,8.32 15.74,15.84 9.81,11.39 4.19,15.84 6.10,8.32 -0.16,4.93 7.90,4.93" fill="#fff" stroke="#262626" stroke-width="3.5" stroke-linejoin="round" clip-path="url(#starclip)"/></svg></div><div style="position:absolute;left:1216.4px;top:445.2px;width:19px;height:16px"><svg width="19" height="16" viewBox="0 0 19 16" style="position:absolute;left:0;top:0;overflow:visible"><polygon points="9.81,-0.48 11.50,4.93 19.56,5.03 14.15,8.32 15.74,15.84 9.81,11.39 4.19,15.84 6.10,8.32 -0.16,4.93 7.90,4.93" fill="#fff" stroke="#262626" stroke-width="3.5" stroke-linejoin="round" clip-path="url(#starclip)"/></svg></div><div style="position:absolute;left:1239.4px;top:445.2px;width:19px;height:16px"><svg width="19" height="16" viewBox="0 0 19 16" style="position:absolute;left:0;top:0;overflow:visible"><polygon points="9.81,-0.48 11.50,4.93 19.56,5.03 14.15,8.32 15.74,15.84 9.81,11.39 4.19,15.84 6.10,8.32 -0.16,4.93 7.90,4.93" fill="#fff" stroke="#262626" stroke-width="3.5" stroke-linejoin="round" clip-path="url(#starclip)"/></svg></div><div style="position:absolute;left:1262.4px;top:445.2px;width:19px;height:16px"><svg width="19" height="16" viewBox="0 0 19 16" style="position:absolute;left:0;top:0;overflow:visible"><polygon points="9.81,-0.48 11.50,4.93 19.56,5.03 14.15,8.32 15.74,15.84 9.81,11.39 4.19,15.84 6.10,8.32 -0.16,4.93 7.90,4.93" fill="#fff" stroke="#262626" stroke-width="3.5" stroke-linejoin="round" clip-path="url(#starclip)"/></svg></div>
<div class="lbl" style="left:827px;top:464px;width:64px;background:#337ab7">Demos</div><div class="lbl" style="left:896px;top:464px;width:36px;background:#d9534f">3.0</div><div class="lbl" style="left:937px;top:464px;width:65px;background:#5cb85c">Official</div>
<div class="t" style="left:827px;top:495.15px;font-size:14px;line-height:14px;color:#777;white-space:nowrap;letter-spacing:0.1px">Submitted by user <span class="a">Godot Engine</span>; <span class="a">MIT</span>; 2018-01-17</div>
<div class="thumb" style="left:142px;top:538px"><svg width="80" height="80" viewBox="0 0 80 80" style="display:block"><g filter="url(#b06)" shape-rendering="crispEdges"><rect x="0" y="0" width="80" height="80" rx="9" fill="#a8a8ac" shape-rendering="auto"/><rect x="1.5" y="2" width="77" height="76" rx="8" fill="#3c3d49" shape-rendering="auto"/><rect x="22.5" y="7.5" width="35.0" height="2.5" fill="#a6acd8"/><rect x="20.0" y="10.0" width="2.5" height="2.5" fill="#c2c8f0"/><rect x="22.5" y="10.0" width="2.5" height="2.5" fill="#0a84d8"/><rect x="25.0" y="10.0" width="2.5" height="2.5" fill="#a6acd8"/><rect x="27.5" y="10.0" width="30.0" height="2.5" fill="#c2c8f0"/><rect x="57.5" y="10.0" width="2.5" height="2.5" fill="#a6acd8"/><rect x="17.5" y="12.5" width="7.5" height="2.5" fill="#c2c8f0"/><rect x="25.0" y="12.5" width="2.5" height="2.5" fill="#0a84d8"/><rect x="27.5" y="12.5" width="2.5" height="2.5" fill="#8a90bc"/><rect x="30.0" y="12.5" width="27.5" height="2.5" fill="#c2c8f0"/><rect x="57.5" y="12.5" width="5.0" height="2.5" fill="#a6acd8"/><rect x="15.0" y="15.0" width="2.5" height="2.5" fill="#c2c8f0"/><rect x="17.5" y="15.0" width="5.0" height="2.5" fill="#e8ecff"/><rect x="22.5" y="15.0" width="2.5" height="2.5" fill="#c2c8f0"/><rect x="25.0" y="15.0" width="2.5" height="2.5" fill="#0a84d8"/><rect x="27.5" y="15.0" width="2.5" height="2.5" fill="#8a90bc"/><rect x="30.0" y="15.0" width="2.5" height="2.5" fill="#c2c8f0"/><rect x="32.5" y="15.0" width="5.0" height="2.5" fill="#30c8f8"/><rect x="37.5" y="15.0" width="12.5" height="2.5" fill="#e8ecff"/><rect x="50.0" y="15.0" width="5.0" height="2.5" fill="#30c8f8"/><rect x="55.0" y="15.0" width="2.5" height="2.5" fill="#c2c8f0"/><rect x="57.5" y="15.0" width="2.5" height="2.5" fill="#a6acd8"/><rect x="60.0" y="15.0" width="5.0" height="2.5" fill="#e8ecff"/><rect x="15.0" y="17.5" width="2.5" height="2.5" fill="#c2c8f0"/><rect x="17.5" y="17.5" width="2.5" height="2.5" fill="#0a84d8"/><rect x="20.0" y="17.5" width="2.5" height="2.5" fill="#e8ecff"/><rect x="22.5" y="17.5" width="2.5" height="2.5" fill="#c2c8f0"/><rect x="25.0" y="17.5" width="2.5" height="2.5" fill="#0a84d8"/><rect x="27.5" y="17.5" width="2.5" height="2.5" fill="#8a90bc"/><rect x="30.0" y="17.5" width="2.5" height="2.5" fill="#c2c8f0"/><rect x="32.5" y="17.5" width="5.0" height="2.5" fill="#30c8f8"/><rect x="37.5" y="17.5" width="12.5" height="2.5" fill="#c2c8f0"/><rect x="50.0" y="17.5" width="5.0" height="2.5" fill="#30c8f8"/><rect x="55.0" y="17.5" width="2.5" height="2.5" fill="#c2c8f0"/><rect x="57.5" y="17.5" width="2.5" height="2.5" fill="#a6acd8"/><rect x="60.0" y="17.5" width="2.5" height="2.5" fill="#e8ecff"/><rect x="62.5" y="17.5" width="2.5" height="2.5" fill="#c2c8f0"/><rect x="15.0" y="20.0" width="2.5" height="2.5" fill="#c2c8f0"/><rect x="17.5" y="20.0" width="2.5" height="2.5" fill="#0a84d8"/><rect x="20.0" y="20.0" width="5.0" height="2.5" fill="#c2c8f0"/><rect x="25.0" y="20.0" width="2.5" height="2.5" fill="#0a84d8"/><rect x="27.5" y="20.0" width="2.5" height="2.5" fill="#8a90bc"/><rect x="30.0" y="20.0" width="27.5" height="2.5" fill="#c2c8f0"/><rect x="57.5" y="20.0" width="2.5" height="2.5" fill="#a6acd8"/><rect x="60.0" y="20.0" width="5.0" height="2.5" fill="#c2c8f0"/><rect x="15.0" y="22.5" width="10.0" height="2.5" fill="#c2c8f0"/><rect x="25.0" y="22.5" width="2.5" height="2.5" fill="#0a84d8"/><rect x="27.5" y="22.5" width="2.5" height="2.5" fill="#8a90bc"/><rect x="30.0" y="22.5" width="10.0" height="2.5" fill="#c2c8f0"/><rect x="40.0" y="22.5" width="10.0" height="2.5" fill="#8088a8"/><rect x="50.0" y="22.5" width="7.5" height="2.5" fill="#c2c8f0"/><rect x="57.5" y="22.5" width="2.5" height="2.5" fill="#a6acd8"/><rect x="60.0" y="22.5" width="2.5" height="2.5" fill="#c2c8f0"/><rect x="62.5" y="22.5" width="2.5" height="2.5" fill="#a6acd8"/><rect x="17.5" y="25.0" width="2.5" height="2.5" fill="#a6acd8"/><rect x="20.0" y="25.0" width="5.0" height="2.5" fill="#c2c8f0"/><rect x="25.0" y="25.0" width="2.5" height="2.5" fill="#0a84d8"/><rect x="27.5" y="25.0" width="2.5" height="2.5" fill="#8a90bc"/><rect x="30.0" y="25.0" width="27.5" height="2.5" fill="#c2c8f0"/><rect x="57.5" y="25.0" width="5.0" height="2.5" fill="#a6acd8"/><rect x="20.0" y="27.5" width="2.5" height="2.5" fill="#a6acd8"/><rect x="22.5" y="27.5" width="2.5" height="2.5" fill="#0a84d8"/><rect x="25.0" y="27.5" width="2.5" height="2.5" fill="#8a90bc"/><rect x="27.5" y="27.5" width="32.5" height="2.5" fill="#a6acd8"/><rect x="22.5" y="30.0" width="35.0" height="2.5" fill="#8a90bc"/><rect x="37.5" y="32.5" width="5.0" height="2.5" fill="#2a6a8a"/><rect x="30.0" y="35.0" width="2.5" height="2.5" fill="#0a84d8"/><rect x="32.5" y="35.0" width="5.0" height="2.5" fill="#a6acd8"/><rect x="37.5" y="35.0" width="5.0" height="2.5" fill="#2a6a8a"/><rect x="42.5" y="35.0" width="7.5" height="2.5" fill="#a6acd8"/><rect x="50.0" y="35.0" width="2.5" height="2.5" fill="#0a84d8"/><rect x="27.5" y="37.5" width="5.0" height="2.5" fill="#0a84d8"/><rect x="32.5" y="37.5" width="7.5" height="2.5" fill="#c2c8f0"/><rect x="40.0" y="37.5" width="2.5" height="2.5" fill="#2a6a8a"/><rect x="42.5" y="37.5" width="7.5" height="2.5" fill="#c2c8f0"/><rect x="50.0" y="37.5" width="5.0" height="2.5" fill="#0a84d8"/><rect x="27.5" y="40.0" width="2.5" height="2.5" fill="#0a84d8"/><rect x="30.0" y="40.0" width="22.5" height="2.5" fill="#c2c8f0"/><rect x="52.5" y="40.0" width="2.5" height="2.5" fill="#0a84d8"/><rect x="25.0" y="42.5" width="5.0" height="2.5" fill="#0a84d8"/><rect x="30.0" y="42.5" width="22.5" height="2.5" fill="#a6acd8"/><rect x="52.5" y="42.5" width="5.0" height="2.5" fill="#0a84d8"/><rect x="22.5" y="45.0" width="2.5" height="2.5" fill="#8a90bc"/><rect x="25.0" y="45.0" width="2.5" height="2.5" fill="#0a84d8"/><rect x="32.5" y="45.0" width="5.0" height="2.5" fill="#a6acd8"/><rect x="37.5" y="45.0" width="5.0" height="2.5" fill="#2a6a8a"/><rect x="42.5" y="45.0" width="5.0" height="2.5" fill="#a6acd8"/><rect x="52.5" y="45.0" width="2.5" height="2.5" fill="#0a84d8"/><rect x="55.0" y="45.0" width="2.5" height="2.5" fill="#8a90bc"/><rect x="22.5" y="47.5" width="2.5" height="2.5" fill="#8a90bc"/><rect x="25.0" y="47.5" width="2.5" height="2.5" fill="#c2c8f0"/><rect x="32.5" y="47.5" width="5.0" height="2.5" fill="#a6acd8"/><rect x="37.5" y="47.5" width="5.0" height="2.5" fill="#2a6a8a"/><rect x="42.5" y="47.5" width="5.0" height="2.5" fill="#a6acd8"/><rect x="52.5" y="47.5" width="2.5" height="2.5" fill="#c2c8f0"/><rect x="55.0" y="47.5" width="2.5" height="2.5" fill="#8a90bc"/><rect x="22.5" y="50.0" width="2.5" height="2.5" fill="#8a90bc"/><rect x="25.0" y="50.0" width="2.5" height="2.5" fill="#c2c8f0"/><rect x="35.0" y="50.0" width="10.0" height="2.5" fill="#c2c8f0"/><rect x="52.5" y="50.0" width="2.5" height="2.5" fill="#c2c8f0"/><rect x="55.0" y="50.0" width="2.5" height="2.5" fill="#8a90bc"/><rect x="22.5" y="52.5" width="2.5" height="2.5" fill="#8a90bc"/><rect x="25.0" y="52.5" width="2.5" height="2.5" fill="#c2c8f0"/><rect x="35.0" y="52.5" width="10.0" height="2.5" fill="#a6acd8"/><rect x="52.5" y="52.5" width="2.5" height="2.5" fill="#c2c8f0"/><rect x="55.0" y="52.5" width="2.5" height="2.5" fill="#8a90bc"/><rect x="22.5" y="55.0" width="2.5" height="2.5" fill="#8a90bc"/><rect x="25.0" y="55.0" width="5.0" height="2.5" fill="#c2c8f0"/><rect x="32.5" y="55.0" width="5.0" height="2.5" fill="#0a84d8"/><rect x="42.5" y="55.0" width="5.0" height="2.5" fill="#0a84d8"/><rect x="50.0" y="55.0" width="5.0" height="2.5" fill="#c2c8f0"/><rect x="55.0" y="55.0" width="2.5" height="2.5" fill="#8a90bc"/><rect x="25.0" y="57.5" width="5.0" height="2.5" fill="#a6acd8"/><rect x="32.5" y="57.5" width="5.0" height="2.5" fill="#0a84d8"/><rect x="42.5" y="57.5" width="5.0" height="2.5" fill="#0a84d8"/><rect x="50.0" y="57.5" width="5.0" height="2.5" fill="#a6acd8"/><rect x="27.5" y="60.0" width="2.5" height="2.5" fill="#8a90bc"/><rect x="30.0" y="60.0" width="5.0" height="2.5" fill="#c2c8f0"/><rect x="45.0" y="60.0" width="2.5" height="2.5" fill="#8a90bc"/><rect x="47.5" y="60.0" width="5.0" height="2.5" fill="#c2c8f0"/><rect x="27.5" y="62.5" width="2.5" height="2.5" fill="#8a90bc"/><rect x="30.0" y="62.5" width="5.0" height="2.5" fill="#c2c8f0"/><rect x="45.0" y="62.5" width="2.5" height="2.5" fill="#8a90bc"/><rect x="47.5" y="62.5" width="5.0" height="2.5" fill="#c2c8f0"/><rect x="27.5" y="65.0" width="2.5" height="2.5" fill="#8a90bc"/><rect x="30.0" y="65.0" width="7.5" height="2.5" fill="#c2c8f0"/><rect x="45.0" y="65.0" width="2.5" height="2.5" fill="#8a90bc"/><rect x="47.5" y="65.0" width="7.5" height="2.5" fill="#c2c8f0"/><rect x="27.5" y="67.5" width="2.5" height="2.5" fill="#8a90bc"/><rect x="30.0" y="67.5" width="7.5" height="2.5" fill="#c2c8f0"/><rect x="45.0" y="67.5" width="2.5" height="2.5" fill="#8a90bc"/><rect x="47.5" y="67.5" width="7.5" height="2.5" fill="#c2c8f0"/><rect x="27.5" y="70.0" width="2.5" height="2.5" fill="#8a90bc"/><rect x="30.0" y="70.0" width="2.5" height="2.5" fill="#c2c8f0"/><rect x="32.5" y="70.0" width="2.5" height="2.5" fill="#8a90bc"/><rect x="35.0" y="70.0" width="2.5" height="2.5" fill="#c2c8f0"/><rect x="37.5" y="70.0" width="2.5" height="2.5" fill="#e8ecff"/><rect x="45.0" y="70.0" width="2.5" height="2.5" fill="#8a90bc"/><rect x="47.5" y="70.0" width="2.5" height="2.5" fill="#c2c8f0"/><rect x="50.0" y="70.0" width="2.5" height="2.5" fill="#8a90bc"/><rect x="52.5" y="70.0" width="2.5" height="2.5" fill="#c2c8f0"/><rect x="55.0" y="70.0" width="2.5" height="2.5" fill="#e8ecff"/><rect x="27.5" y="72.5" width="2.5" height="2.5" fill="#8a90bc"/><rect x="30.0" y="72.5" width="2.5" height="2.5" fill="#c2c8f0"/><rect x="32.5" y="72.5" width="2.5" height="2.5" fill="#8a90bc"/><rect x="35.0" y="72.5" width="5.0" height="2.5" fill="#e8ecff"/><rect x="45.0" y="72.5" width="2.5" height="2.5" fill="#8a90bc"/><rect x="47.5" y="72.5" width="2.5" height="2.5" fill="#c2c8f0"/><rect x="50.0" y="72.5" width="2.5" height="2.5" fill="#8a90bc"/><rect x="52.5" y="72.5" width="5.0" height="2.5" fill="#e8ecff"/></g></svg></div>
<div class="t" style="left:242px;top:538.76px;font-size:18px;line-height:18px;color:#337ab7;white-space:nowrap">2D Physics Platformer Demo (Rigidbody) <span style="font-size:14px;color:#777;letter-spacing:0.4px;margin-left:-0.5px">3.0-219783e</span></div>
<div style="position:absolute;left:585.4px;top:559.7px;width:19px;height:16px"><svg width="19" height="16" viewBox="0 0 19 16" style="position:absolute;left:0;top:0;overflow:visible"><polygon points="9.81,-0.48 11.50,4.93 19.56,5.03 14.15,8.32 15.74,15.84 9.81,11.39 4.19,15.84 6.10,8.32 -0.16,4.93 7.90,4.93" fill="#fff" stroke="#262626" stroke-width="3.5" stroke-linejoin="round" clip-path="url(#starclip)"/></svg></div><div style="position:absolute;left:608.4px;top:559.7px;width:19px;height:16px"><svg width="19" height="16" viewBox="0 0 19 16" style="position:absolute;left:0;top:0;overflow:visible"><polygon points="9.81,-0.48 11.50,4.93 19.56,5.03 14.15,8.32 15.74,15.84 9.81,11.39 4.19,15.84 6.10,8.32 -0.16,4.93 7.90,4.93" fill="#fff" stroke="#262626" stroke-width="3.5" stroke-linejoin="round" clip-path="url(#starclip)"/></svg></div><div style="position:absolute;left:631.4px;top:559.7px;width:19px;height:16px"><svg width="19" height="16" viewBox="0 0 19 16" style="position:absolute;left:0;top:0;overflow:visible"><polygon points="9.81,-0.48 11.50,4.93 19.56,5.03 14.15,8.32 15.74,15.84 9.81,11.39 4.19,15.84 6.10,8.32 -0.16,4.93 7.90,4.93" fill="#fff" stroke="#262626" stroke-width="3.5" stroke-linejoin="round" clip-path="url(#starclip)"/></svg></div><div style="position:absolute;left:654.4px;top:559.7px;width:19px;height:16px"><svg width="19" height="16" viewBox="0 0 19 16" style="position:absolute;left:0;top:0;overflow:visible"><polygon points="9.81,-0.48 11.50,4.93 19.56,5.03 14.15,8.32 15.74,15.84 9.81,11.39 4.19,15.84 6.10,8.32 -0.16,4.93 7.90,4.93" fill="#fff" stroke="#262626" stroke-width="3.5" stroke-linejoin="round" clip-path="url(#starclip)"/></svg></div><div style="position:absolute;left:677.4px;top:559.7px;width:19px;height:16px"><svg width="19" height="16" viewBox="0 0 19 16" style="position:absolute;left:0;top:0;overflow:visible"><polygon points="9.81,-0.48 11.50,4.93 19.56,5.03 14.15,8.32 15.74,15.84 9.81,11.39 4.19,15.84 6.10,8.32 -0.16,4.93 7.90,4.93" fill="#fff" stroke="#262626" stroke-width="3.5" stroke-linejoin="round" clip-path="url(#starclip)"/></svg></div>
<div class="lbl" style="left:242px;top:559px;width:64px;background:#337ab7">Demos</div><div class="lbl" style="left:311px;top:559px;width:36px;background:#d9534f">3.0</div><div class="lbl" style="left:352px;top:559px;width:65px;background:#5cb85c">Official</div>
<div class="t" style="left:242px;top:590.15px;font-size:14px;line-height:14px;color:#777;white-space:nowrap;letter-spacing:0.1px">Submitted by user <span class="a">Godot Engine</span>; <span class="a">MIT</span>; 2018-01-17</div>
<div class="thumb" style="left:727px;top:538px"><svg width="80" height="80" viewBox="0 0 80 80" style="display:block"><g filter="url(#b06)" shape-rendering="crispEdges"><rect x="0" y="0" width="80" height="80" rx="9" fill="#a8a8ac" shape-rendering="auto"/><rect x="1.5" y="2" width="77" height="76" rx="8" fill="#3c3d49" shape-rendering="auto"/><rect x="22.5" y="7.5" width="35.0" height="2.5" fill="#a6acd8"/><rect x="20.0" y="10.0" width="2.5" height="2.5" fill="#c2c8f0"/><rect x="22.5" y="10.0" width="2.5" height="2.5" fill="#0a84d8"/><rect x="25.0" y="10.0" width="2.5" height="2.5" fill="#a6acd8"/><rect x="27.5" y="10.0" width="30.0" height="2.5" fill="#c2c8f0"/><rect x="57.5" y="10.0" width="2.5" height="2.5" fill="#a6acd8"/><rect x="17.5" y="12.5" width="7.5" height="2.5" fill="#c2c8f0"/><rect x="25.0" y="12.5" width="2.5" height="2.5" fill="#0a84d8"/><rect x="27.5" y="12.5" width="2.5" height="2.5" fill="#8a90bc"/><rect x="30.0" y="12.5" width="27.5" height="2.5" fill="#c2c8f0"/><rect x="57.5" y="12.5" width="5.0" height="2.5" fill="#a6acd8"/><rect x="15.0" y="15.0" width="2.5" height="2.5" fill="#c2c8f0"/><rect x="17.5" y="15.0" width="5.0" height="2.5" fill="#e8ecff"/><rect x="22.5" y="15.0" width="2.5" height="2.5" fill="#c2c8f0"/><rect x="25.0" y="15.0" width="2.5" height="2.5" fill="#0a84d8"/><rect x="27.5" y="15.0" width="2.5" height="2.5" fill="#8a90bc"/><rect x="30.0" y="15.0" width="2.5" height="2.5" fill="#c2c8f0"/><rect x="32.5" y="15.0" width="5.0" height="2.5" fill="#30c8f8"/><rect x="37.5" y="15.0" width="12.5" height="2.5" fill="#e8ecff"/><rect x="50.0" y="15.0" width="5.0" height="2.5" fill="#30c8f8"/><rect x="55.0" y="15.0" width="2.5" height="2.5" fill="#c2c8f0"/><rect x="57.5" y="15.0" width="2.5" height="2.5" fill="#a6acd8"/><rect x="60.0" y="15.0" width="5.0" height="2.5" fill="#e8ecff"/><rect x="15.0" y="17.5" width="2.5" height="2.5" fill="#c2c8f0"/><rect x="17.5" y="17.5" width="2.5" height="2.5" fill="#0a84d8"/><rect x="20.0" y="17.5" width="2.5" height="2.5" fill="#e8ecff"/><rect x="22.5" y="17.5" width="2.5" height="2.5" fill="#c2c8f0"/><rect x="25.0" y="17.5" width="2.5" height="2.5" fill="#0a84d8"/><rect x="27.5" y="17.5" width="2.5" height="2.5" fill="#8a90bc"/><rect x="30.0" y="17.5" width="2.5" height="2.5" fill="#c2c8f0"/><rect x="32.5" y="17.5" width="5.0" height="2.5" fill="#30c8f8"/><rect x="37.5" y="17.5" width="12.5" height="2.5" fill="#c2c8f0"/><rect x="50.0" y="17.5" width="5.0" height="2.5" fill="#30c8f8"/><rect x="55.0" y="17.5" width="2.5" height="2.5" fill="#c2c8f0"/><rect x="57.5" y="17.5" width="2.5" height="2.5" fill="#a6acd8"/><rect x="60.0" y="17.5" width="2.5" height="2.5" fill="#e8ecff"/><rect x="62.5" y="17.5" width="2.5" height="2.5" fill="#c2c8f0"/><rect x="15.0" y="20.0" width="2.5" height="2.5" fill="#c2c8f0"/><rect x="17.5" y="20.0" width="2.5" height="2.5" fill="#0a84d8"/><rect x="20.0" y="20.0" width="5.0" height="2.5" fill="#c2c8f0"/><rect x="25.0" y="20.0" width="2.5" height="2.5" fill="#0a84d8"/><rect x="27.5" y="20.0" width="2.5" height="2.5" fill="#8a90bc"/><rect x="30.0" y="20.0" width="27.5" height="2.5" fill="#c2c8f0"/><rect x="57.5" y="20.0" width="2.5" height="2.5" fill="#a6acd8"/><rect x="60.0" y="20.0" width="5.0" height="2.5" fill="#c2c8f0"/><rect x="15.0" y="22.5" width="10.0" height="2.5" fill="#c2c8f0"/><rect x="25.0" y="22.5" width="2.5" height="2.5" fill="#0a84d8"/><rect x="27.5" y="22.5" width="2.5" height="2.5" fill="#8a90bc"/><rect x="30.0" y="22.5" width="10.0" height="2.5" fill="#c2c8f0"/><rect x="40.0" y="22.5" width="10.0" height="2.5" fill="#8088a8"/><rect x="50.0" y="22.5" width="7.5" height="2.5" fill="#c2c8f0"/><rect x="57.5" y="22.5" width="2.5" height="2.5" fill="#a6acd8"/><rect x="60.0" y="22.5" width="2.5" height="2.5" fill="#c2c8f0"/><rect x="62.5" y="22.5" width="2.5" height="2.5" fill="#a6acd8"/><rect x="17.5" y="25.0" width="2.5" height="2.5" fill="#a6acd8"/><rect x="20.0" y="25.0" width="5.0" height="2.5" fill="#c2c8f0"/><rect x="25.0" y="25.0" width="2.5" height="2.5" fill="#0a84d8"/><rect x="27.5" y="25.0" width="2.5" height="2.5" fill="#8a90bc"/><rect x="30.0" y="25.0" width="27.5" height="2.5" fill="#c2c8f0"/><rect x="57.5" y="25.0" width="5.0" height="2.5" fill="#a6acd8"/><rect x="20.0" y="27.5" width="2.5" height="2.5" fill="#a6acd8"/><rect x="22.5" y="27.5" width="2.5" height="2.5" fill="#0a84d8"/><rect x="25.0" y="27.5" width="2.5" height="2.5" fill="#8a90bc"/><rect x="27.5" y="27.5" width="32.5" height="2.5" fill="#a6acd8"/><rect x="22.5" y="30.0" width="35.0" height="2.5" fill="#8a90bc"/><rect x="37.5" y="32.5" width="5.0" height="2.5" fill="#2a6a8a"/><rect x="30.0" y="35.0" width="2.5" height="2.5" fill="#0a84d8"/><rect x="32.5" y="35.0" width="5.0" height="2.5" fill="#a6acd8"/><rect x="37.5" y="35.0" width="5.0" height="2.5" fill="#2a6a8a"/><rect x="42.5" y="35.0" width="7.5" height="2.5" fill="#a6acd8"/><rect x="50.0" y="35.0" width="2.5" height="2.5" fill="#0a84d8"/><rect x="27.5" y="37.5" width="5.0" height="2.5" fill="#0a84d8"/><rect x="32.5" y="37.5" width="7.5" height="2.5" fill="#c2c8f0"/><rect x="40.0" y="37.5" width="2.5" height="2.5" fill="#2a6a8a"/><rect x="42.5" y="37.5" width="7.5" height="2.5" fill="#c2c8f0"/><rect x="50.0" y="37.5" width="5.0" height="2.5" fill="#0a84d8"/><rect x="27.5" y="40.0" width="2.5" height="2.5" fill="#0a84d8"/><rect x="30.0" y="40.0" width="22.5" height="2.5" fill="#c2c8f0"/><rect x="52.5" y="40.0" width="2.5" height="2.5" fill="#0a84d8"/><rect x="25.0" y="42.5" width="5.0" height="2.5" fill="#0a84d8"/><rect x="30.0" y="42.5" width="22.5" height="2.5" fill="#a6acd8"/><rect x="52.5" y="42.5" width="5.0" height="2.5" fill="#0a84d8"/><rect x="22.5" y="45.0" width="2.5" height="2.5" fill="#8a90bc"/><rect x="25.0" y="45.0" width="2.5" height="2.5" fill="#0a84d8"/><rect x="32.5" y="45.0" width="5.0" height="2.5" fill="#a6acd8"/><rect x="37.5" y="45.0" width="5.0" height="2.5" fill="#2a6a8a"/><rect x="42.5" y="45.0" width="5.0" height="2.5" fill="#a6acd8"/><rect x="52.5" y="45.0" width="2.5" height="2.5" fill="#0a84d8"/><rect x="55.0" y="45.0" width="2.5" height="2.5" fill="#8a90bc"/><rect x="22.5" y="47.5" width="2.5" height="2.5" fill="#8a90bc"/><rect x="25.0" y="47.5" width="2.5" height="2.5" fill="#c2c8f0"/><rect x="32.5" y="47.5" width="5.0" height="2.5" fill="#a6acd8"/><rect x="37.5" y="47.5" width="5.0" height="2.5" fill="#2a6a8a"/><rect x="42.5" y="47.5" width="5.0" height="2.5" fill="#a6acd8"/><rect x="52.5" y="47.5" width="2.5" height="2.5" fill="#c2c8f0"/><rect x="55.0" y="47.5" width="2.5" height="2.5" fill="#8a90bc"/><rect x="22.5" y="50.0" width="2.5" height="2.5" fill="#8a90bc"/><rect x="25.0" y="50.0" width="2.5" height="2.5" fill="#c2c8f0"/><rect x="35.0" y="50.0" width="10.0" height="2.5" fill="#c2c8f0"/><rect x="52.5" y="50.0" width="2.5" height="2.5" fill="#c2c8f0"/><rect x="55.0" y="50.0" width="2.5" height="2.5" fill="#8a90bc"/><rect x="22.5" y="52.5" width="2.5" height="2.5" fill="#8a90bc"/><rect x="25.0" y="52.5" width="2.5" height="2.5" fill="#c2c8f0"/><rect x="35.0" y="52.5" width="10.0" height="2.5" fill="#a6acd8"/><rect x="52.5" y="52.5" width="2.5" height="2.5" fill="#c2c8f0"/><rect x="55.0" y="52.5" width="2.5" height="2.5" fill="#8a90bc"/><rect x="22.5" y="55.0" width="2.5" height="2.5" fill="#8a90bc"/><rect x="25.0" y="55.0" width="5.0" height="2.5" fill="#c2c8f0"/><rect x="32.5" y="55.0" width="5.0" height="2.5" fill="#0a84d8"/><rect x="42.5" y="55.0" width="5.0" height="2.5" fill="#0a84d8"/><rect x="50.0" y="55.0" width="5.0" height="2.5" fill="#c2c8f0"/><rect x="55.0" y="55.0" width="2.5" height="2.5" fill="#8a90bc"/><rect x="25.0" y="57.5" width="5.0" height="2.5" fill="#a6acd8"/><rect x="32.5" y="57.5" width="5.0" height="2.5" fill="#0a84d8"/><rect x="42.5" y="57.5" width="5.0" height="2.5" fill="#0a84d8"/><rect x="50.0" y="57.5" width="5.0" height="2.5" fill="#a6acd8"/><rect x="27.5" y="60.0" width="2.5" height="2.5" fill="#8a90bc"/><rect x="30.0" y="60.0" width="5.0" height="2.5" fill="#c2c8f0"/><rect x="45.0" y="60.0" width="2.5" height="2.5" fill="#8a90bc"/><rect x="47.5" y="60.0" width="5.0" height="2.5" fill="#c2c8f0"/><rect x="27.5" y="62.5" width="2.5" height="2.5" fill="#8a90bc"/><rect x="30.0" y="62.5" width="5.0" height="2.5" fill="#c2c8f0"/><rect x="45.0" y="62.5" width="2.5" height="2.5" fill="#8a90bc"/><rect x="47.5" y="62.5" width="5.0" height="2.5" fill="#c2c8f0"/><rect x="27.5" y="65.0" width="2.5" height="2.5" fill="#8a90bc"/><rect x="30.0" y="65.0" width="7.5" height="2.5" fill="#c2c8f0"/><rect x="45.0" y="65.0" width="2.5" height="2.5" fill="#8a90bc"/><rect x="47.5" y="65.0" width="7.5" height="2.5" fill="#c2c8f0"/><rect x="27.5" y="67.5" width="2.5" height="2.5" fill="#8a90bc"/><rect x="30.0" y="67.5" width="7.5" height="2.5" fill="#c2c8f0"/><rect x="45.0" y="67.5" width="2.5" height="2.5" fill="#8a90bc"/><rect x="47.5" y="67.5" width="7.5" height="2.5" fill="#c2c8f0"/><rect x="27.5" y="70.0" width="2.5" height="2.5" fill="#8a90bc"/><rect x="30.0" y="70.0" width="2.5" height="2.5" fill="#c2c8f0"/><rect x="32.5" y="70.0" width="2.5" height="2.5" fill="#8a90bc"/><rect x="35.0" y="70.0" width="2.5" height="2.5" fill="#c2c8f0"/><rect x="37.5" y="70.0" width="2.5" height="2.5" fill="#e8ecff"/><rect x="45.0" y="70.0" width="2.5" height="2.5" fill="#8a90bc"/><rect x="47.5" y="70.0" width="2.5" height="2.5" fill="#c2c8f0"/><rect x="50.0" y="70.0" width="2.5" height="2.5" fill="#8a90bc"/><rect x="52.5" y="70.0" width="2.5" height="2.5" fill="#c2c8f0"/><rect x="55.0" y="70.0" width="2.5" height="2.5" fill="#e8ecff"/><rect x="27.5" y="72.5" width="2.5" height="2.5" fill="#8a90bc"/><rect x="30.0" y="72.5" width="2.5" height="2.5" fill="#c2c8f0"/><rect x="32.5" y="72.5" width="2.5" height="2.5" fill="#8a90bc"/><rect x="35.0" y="72.5" width="5.0" height="2.5" fill="#e8ecff"/><rect x="45.0" y="72.5" width="2.5" height="2.5" fill="#8a90bc"/><rect x="47.5" y="72.5" width="2.5" height="2.5" fill="#c2c8f0"/><rect x="50.0" y="72.5" width="2.5" height="2.5" fill="#8a90bc"/><rect x="52.5" y="72.5" width="5.0" height="2.5" fill="#e8ecff"/></g></svg></div>
<div class="t" style="left:827px;top:538.76px;font-size:18px;line-height:18px;color:#337ab7;white-space:nowrap">2D Platformer Demo (Kinematicbody) <span style="font-size:14px;color:#777;letter-spacing:0.4px;margin-left:-0.5px">3.0-219783e</span></div>
<div style="position:absolute;left:1170.4px;top:559.7px;width:19px;height:16px"><svg width="19" height="16" viewBox="0 0 19 16" style="position:absolute;left:0;top:0;overflow:visible"><polygon points="9.81,-0.48 11.50,4.93 19.56,5.03 14.15,8.32 15.74,15.84 9.81,11.39 4.19,15.84 6.10,8.32 -0.16,4.93 7.90,4.93" fill="#fff" stroke="#262626" stroke-width="3.5" stroke-linejoin="round" clip-path="url(#starclip)"/></svg></div><div style="position:absolute;left:1193.4px;top:559.7px;width:19px;height:16px"><svg width="19" height="16" viewBox="0 0 19 16" style="position:absolute;left:0;top:0;overflow:visible"><polygon points="9.81,-0.48 11.50,4.93 19.56,5.03 14.15,8.32 15.74,15.84 9.81,11.39 4.19,15.84 6.10,8.32 -0.16,4.93 7.90,4.93" fill="#fff" stroke="#262626" stroke-width="3.5" stroke-linejoin="round" clip-path="url(#starclip)"/></svg></div><div style="position:absolute;left:1216.4px;top:559.7px;width:19px;height:16px"><svg width="19" height="16" viewBox="0 0 19 16" style="position:absolute;left:0;top:0;overflow:visible"><polygon points="9.81,-0.48 11.50,4.93 19.56,5.03 14.15,8.32 15.74,15.84 9.81,11.39 4.19,15.84 6.10,8.32 -0.16,4.93 7.90,4.93" fill="#fff" stroke="#262626" stroke-width="3.5" stroke-linejoin="round" clip-path="url(#starclip)"/></svg></div><div style="position:absolute;left:1239.4px;top:559.7px;width:19px;height:16px"><svg width="19" height="16" viewBox="0 0 19 16" style="position:absolute;left:0;top:0;overflow:visible"><polygon points="9.81,-0.48 11.50,4.93 19.56,5.03 14.15,8.32 15.74,15.84 9.81,11.39 4.19,15.84 6.10,8.32 -0.16,4.93 7.90,4.93" fill="#fff" stroke="#262626" stroke-width="3.5" stroke-linejoin="round" clip-path="url(#starclip)"/></svg></div><div style="position:absolute;left:1262.4px;top:559.7px;width:19px;height:16px"><svg width="19" height="16" viewBox="0 0 19 16" style="position:absolute;left:0;top:0;overflow:visible"><polygon points="9.81,-0.48 11.50,4.93 19.56,5.03 14.15,8.32 15.74,15.84 9.81,11.39 4.19,15.84 6.10,8.32 -0.16,4.93 7.90,4.93" fill="#fff" stroke="#262626" stroke-width="3.5" stroke-linejoin="round" clip-path="url(#starclip)"/></svg></div>
<div class="lbl" style="left:827px;top:559px;width:64px;background:#337ab7">Demos</div><div class="lbl" style="left:896px;top:559px;width:36px;background:#d9534f">3.0</div><div class="lbl" style="left:937px;top:559px;width:65px;background:#5cb85c">Official</div>
<div class="t" style="left:827px;top:590.15px;font-size:14px;line-height:14px;color:#777;white-space:nowrap;letter-spacing:0.1px">Submitted by user <span class="a">Godot Engine</span>; <span class="a">MIT</span>; 2018-01-17</div>
<div style="position:absolute;left:142px;top:653px;width:246px;height:34px;border:1px solid #ddd;border-radius:4px;box-sizing:border-box"></div>
<div class="t" style="left:142px;width:33px;text-align:center;top:663.15px;font-size:14px;line-height:14px;color:#777">&laquo;</div><div style="position:absolute;left:175px;top:653px;width:1px;height:34px;background:#ddd"></div>
<div style="position:absolute;left:175px;top:653px;width:34px;height:34px;background:#337ab7"></div>
<div class="t" style="left:175px;width:34px;text-align:center;top:663.15px;font-size:14px;line-height:14px;color:#fff">1</div><div style="position:absolute;left:209px;top:653px;width:1px;height:34px;background:#ddd"></div>
<div class="t" style="left:209px;width:33px;text-align:center;top:663.15px;font-size:14px;line-height:14px;color:#337ab7">2</div><div style="position:absolute;left:241px;top:653px;width:1px;height:34px;background:#ddd"></div>
<div class="t" style="left:241px;width:34px;text-align:center;top:663.15px;font-size:14px;line-height:14px;color:#337ab7">3</div><div style="position:absolute;left:274px;top:653px;width:1px;height:34px;background:#ddd"></div>
<div class="t" style="left:274px;width:40px;text-align:center;top:663.15px;font-size:14px;line-height:14px;color:#777">&hellip;</div><div style="position:absolute;left:313px;top:653px;width:1px;height:34px;background:#ddd"></div>
<div class="t" style="left:313px;width:42px;text-align:center;top:663.15px;font-size:14px;line-height:14px;color:#337ab7">15</div><div style="position:absolute;left:354px;top:653px;width:1px;height:34px;background:#ddd"></div>
<div class="t" style="left:354px;width:34px;text-align:center;top:663.15px;font-size:14px;line-height:14px;color:#337ab7">&raquo;</div>
<div class="t" style="left:142px;top:714.85px;font-size:14px;line-height:14px;color:#333;font-weight:normal;letter-spacing:0.094px;">10 items per page, 147 items total.</div>
<div class="t" style="left:142px;top:744.85px;font-size:14px;line-height:14px;color:#333;font-weight:normal;letter-spacing:0.15px;">Change items per page to:</div>
<div style="position:absolute;left:314px;top:742px;width:172px;height:22px;border:1px solid #ccc;border-radius:3px;box-sizing:border-box"></div><div class="t" style="left:314px;width:26px;text-align:center;top:747.34px;font-size:12px;line-height:12px;color:#333">10</div><div style="position:absolute;left:339px;top:742px;width:1px;height:22px;background:#ccc"></div>
<div class="t" style="left:339px;width:26px;text-align:center;top:747.34px;font-size:12px;line-height:12px;color:#333">20</div><div style="position:absolute;left:364px;top:742px;width:1px;height:22px;background:#ccc"></div>
<div class="t" style="left:364px;width:26px;text-align:center;top:747.34px;font-size:12px;line-height:12px;color:#333">50</div><div style="position:absolute;left:389px;top:742px;width:1px;height:22px;background:#ccc"></div>
<div class="t" style="left:389px;width:33px;text-align:center;top:747.34px;font-size:12px;line-height:12px;color:#333">100</div><div style="position:absolute;left:421px;top:742px;width:1px;height:22px;background:#ccc"></div>
<div class="t" style="left:421px;width:33px;text-align:center;top:747.34px;font-size:12px;line-height:12px;color:#333">200</div><div style="position:absolute;left:453px;top:742px;width:1px;height:22px;background:#ccc"></div>
<div class="t" style="left:453px;width:33px;text-align:center;top:747.34px;font-size:12px;line-height:12px;color:#333">500</div>
<div style="position:absolute;left:142px;top:774px;width:129px;height:34px;background:#f0ad4e;border-radius:4px"></div>
<svg style="position:absolute;left:156px;top:783px" width="11" height="14" viewBox="0 0 11 14"><path d="M0.3,1 H10.3 M0.3,12.8 H10.3" stroke="#fff" stroke-width="1.9" fill="none"/><path d="M1.8,1.5 C1.8,5 5.3,5.8 5.3,6.9 C5.3,8 1.8,8.8 1.8,12.3 M8.8,1.5 C8.8,5 5.3,5.8 5.3,6.9 C5.3,8 8.8,8.8 8.8,12.3" stroke="#fff" stroke-width="1.3" fill="none"/></svg>
<div class="t" style="left:172px;top:784.15px;font-size:14px;line-height:14px;color:#fff;font-weight:normal;">View Pending</div>
<div style="position:absolute;left:141px;top:158px;width:1143px;height:651px;border:2px solid #f70512;box-sizing:border-box"></div>
<div style="position:absolute;left:143px;top:160px;width:1139px;height:1px;background:rgba(40,60,60,0.6)"></div>
<div style="position:absolute;left:141px;top:809px;width:1143px;height:1px;background:rgba(40,60,60,0.6)"></div>
<div style="position:absolute;left:142px;top:828px;width:1140px;height:1px;background:#eee"></div>
<div class="t" style="left:142px;top:852.15px;font-size:14px;line-height:14px;color:#333;font-weight:normal;letter-spacing:0.067px;">Copyright &copy; 2017 The Godot Engine community - MIT Licensed.</div>
<div class="t" style="right:76.86px;top:852.15px;font-size:14px;line-height:14px;color:#777;font-weight:normal;letter-spacing:0.135px;">Currently running version <span class="a">9cd0e06</span>.</div>
<div class="t" style="right:76.96px;top:881.55px;font-size:14px;line-height:14px;color:#777;font-weight:normal;letter-spacing:0.04px;">Links: <span class="a">GitHub repository</span> | <span class="a">Issues</span> | <span class="a">Godot Engine homepage</span></div>
<div style="position:absolute;left:140px;top:841px;width:1144px;height:57px;border:2px solid #f59a00;box-sizing:border-box"></div>
<div style="position:absolute;left:142px;top:843px;width:1140px;height:1px;background:rgba(40,45,60,0.6)"></div>
<div style="position:absolute;left:140px;top:898px;width:1144px;height:1px;background:rgba(40,45,60,0.6)"></div>
</body></html>
